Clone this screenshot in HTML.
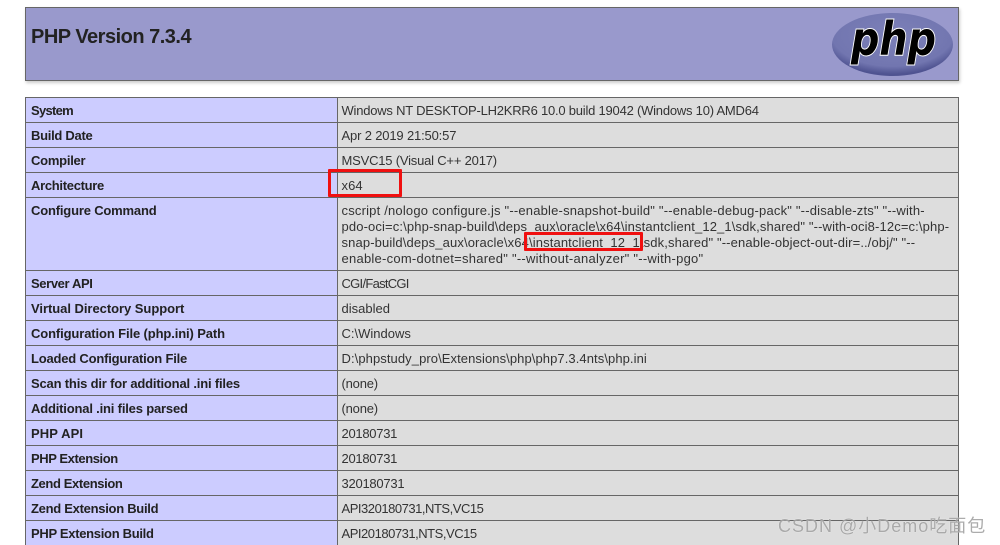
<!DOCTYPE html>
<html><head><meta charset="utf-8">
<style>
html,body{margin:0;padding:0;background:#fff;}
body{width:1000px;height:545px;overflow:hidden;position:relative;font-family:"Liberation Sans",sans-serif;color:#222;}
.h{position:absolute;left:25px;top:7px;width:932px;height:72px;background:#9999cc;border:1px solid #666;box-shadow:1px 2px 3px #ccc;}
h1{position:absolute;left:5px;top:17px;margin:0;font-size:20px;line-height:24px;font-weight:bold;color:#222;letter-spacing:-.5px;}
.logo{position:absolute;left:830px;top:10px;}
.l{position:absolute;background:#666;}
.e{position:absolute;left:26px;width:311px;background:#ccccff;}
.v{position:absolute;left:338px;width:620px;background:#ddd;}
.t{position:absolute;white-space:nowrap;font-size:13px;line-height:16px;}
.b{font-weight:bold;left:31px;font-size:13px;}
.d{left:341.5px;color:#333;}
.r{position:absolute;border:3px solid #f01010;box-sizing:border-box;border-radius:1px;}
.w{position:absolute;left:778px;top:515px;font-size:18px;line-height:22px;letter-spacing:1px;color:rgba(90,90,90,.5);font-family:"Liberation Sans","Noto Sans CJK SC",sans-serif;white-space:nowrap;text-shadow:0 0 1px #fff;}
</style></head><body>
<div class="h"><h1>PHP Version 7.3.4</h1></div>
<svg class="logo" width="126" height="68" viewBox="0 0 126 68">
<defs><radialGradient id="g" cx="50%" cy="35%" r="62%"><stop offset="0" stop-color="#7c80b8"/><stop offset=".8" stop-color="#7276b0"/><stop offset="1" stop-color="#4f5391"/></radialGradient></defs>
<ellipse cx="62.5" cy="34.5" rx="60.5" ry="31.5" fill="url(#g)"/>
<text x="21" y="45" font-family="DejaVu Sans,sans-serif" font-size="46" font-style="italic" font-weight="bold" textLength="85" lengthAdjust="spacingAndGlyphs" fill="#000" stroke="#fff" stroke-width="2" paint-order="stroke">php</text>
</svg>

<div class="e" style="top:98px;height:24px"></div>
<div class="v" style="top:98px;height:24px"></div>
<div class="e" style="top:123px;height:24px"></div>
<div class="v" style="top:123px;height:24px"></div>
<div class="e" style="top:148px;height:24px"></div>
<div class="v" style="top:148px;height:24px"></div>
<div class="e" style="top:173px;height:24px"></div>
<div class="v" style="top:173px;height:24px"></div>
<div class="e" style="top:198px;height:347px"></div>
<div class="v" style="top:198px;height:347px"></div>

<div class="l" style="left:25px;top:97px;width:934px;height:1px"></div>
<div class="l" style="left:25px;top:122px;width:934px;height:1px"></div>
<div class="l" style="left:25px;top:147px;width:934px;height:1px"></div>
<div class="l" style="left:25px;top:172px;width:934px;height:1px"></div>
<div class="l" style="left:25px;top:197px;width:934px;height:1px"></div>
<div class="l" style="left:25px;top:270px;width:934px;height:1px"></div>
<div class="l" style="left:25px;top:295px;width:934px;height:1px"></div>
<div class="l" style="left:25px;top:320px;width:934px;height:1px"></div>
<div class="l" style="left:25px;top:345px;width:934px;height:1px"></div>
<div class="l" style="left:25px;top:370px;width:934px;height:1px"></div>
<div class="l" style="left:25px;top:395px;width:934px;height:1px"></div>
<div class="l" style="left:25px;top:420px;width:934px;height:1px"></div>
<div class="l" style="left:25px;top:445px;width:934px;height:1px"></div>
<div class="l" style="left:25px;top:470px;width:934px;height:1px"></div>
<div class="l" style="left:25px;top:495px;width:934px;height:1px"></div>
<div class="l" style="left:25px;top:520px;width:934px;height:1px"></div>
<div class="l" style="left:25px;top:97px;width:1px;height:448px"></div>
<div class="l" style="left:337px;top:97px;width:1px;height:448px"></div>
<div class="l" style="left:958px;top:97px;width:1px;height:448px"></div>

<div class="t b" style="top:103px;letter-spacing:-.72px">System</div>
<div class="t b" style="top:128px;letter-spacing:-.28px">Build Date</div>
<div class="t b" style="top:153px;letter-spacing:-.25px">Compiler</div>
<div class="t b" style="top:178px;letter-spacing:-.3px">Architecture</div>
<div class="t b" style="top:203px;letter-spacing:-.18px">Configure Command</div>
<div class="t b" style="top:276px;letter-spacing:-.38px">Server API</div>
<div class="t b" style="top:301px;letter-spacing:-.04px">Virtual Directory Support</div>
<div class="t b" style="top:326px;letter-spacing:-.12px">Configuration File (php.ini) Path</div>
<div class="t b" style="top:351px;letter-spacing:-.2px">Loaded Configuration File</div>
<div class="t b" style="top:376px;letter-spacing:-.18px">Scan this dir for additional .ini files</div>
<div class="t b" style="top:401px;letter-spacing:-.18px">Additional .ini files parsed</div>
<div class="t b" style="top:426px;letter-spacing:.12px">PHP API</div>
<div class="t b" style="top:451px;letter-spacing:-.42px">PHP Extension</div>
<div class="t b" style="top:476px;letter-spacing:-.38px">Zend Extension</div>
<div class="t b" style="top:501px;letter-spacing:-.28px">Zend Extension Build</div>
<div class="t b" style="top:526px;letter-spacing:-.3px">PHP Extension Build</div>

<div class="t d" style="top:103px;letter-spacing:-.22px">Windows NT DESKTOP-LH2KRR6 10.0 build 19042 (Windows 10) AMD64</div>
<div class="t d" style="top:128px;letter-spacing:-.16px">Apr 2 2019 21:50:57</div>
<div class="t d" style="top:153px;letter-spacing:-.2px">MSVC15 (Visual C++ 2017)</div>
<div class="t d" style="top:178px;letter-spacing:.1px">x64</div>
<div class="t d" style="top:203px;letter-spacing:.19px">cscript /nologo configure.js "--enable-snapshot-build" "--enable-debug-pack" "--disable-zts" "--with-</div>
<div class="t d" style="top:219px;letter-spacing:.13px">pdo-oci=c:\php-snap-build\deps_aux\oracle\x64\instantclient_12_1\sdk,shared" "--with-oci8-12c=c:\php-</div>
<div class="t d" style="top:235px;letter-spacing:.13px">snap-build\deps_aux\oracle\x64\instantclient_12_1\sdk,shared" "--enable-object-out-dir=../obj/" "--</div>
<div class="t d" style="top:251px;letter-spacing:.25px">enable-com-dotnet=shared" "--without-analyzer" "--with-pgo"</div>
<div class="t d" style="top:276px;letter-spacing:-.72px">CGI/FastCGI</div>
<div class="t d" style="top:301px">disabled</div>
<div class="t d" style="top:326px">C:\Windows</div>
<div class="t d" style="top:351px;letter-spacing:.08px">D:\phpstudy_pro\Extensions\php\php7.3.4nts\php.ini</div>
<div class="t d" style="top:376px;letter-spacing:-.2px">(none)</div>
<div class="t d" style="top:401px;letter-spacing:-.2px">(none)</div>
<div class="t d" style="top:426px;letter-spacing:-.28px">20180731</div>
<div class="t d" style="top:451px;letter-spacing:-.28px">20180731</div>
<div class="t d" style="top:476px;letter-spacing:-.25px">320180731</div>
<div class="t d" style="top:501px;letter-spacing:-.47px">API320180731,NTS,VC15</div>
<div class="t d" style="top:526px;letter-spacing:-.47px">API20180731,NTS,VC15</div>

<div class="r" style="left:328px;top:169px;width:74px;height:28px"></div>
<div class="r" style="left:524px;top:232px;width:119px;height:19px"></div>
<div class="w">CSDN @小Demo吃面包</div>
</body></html>
